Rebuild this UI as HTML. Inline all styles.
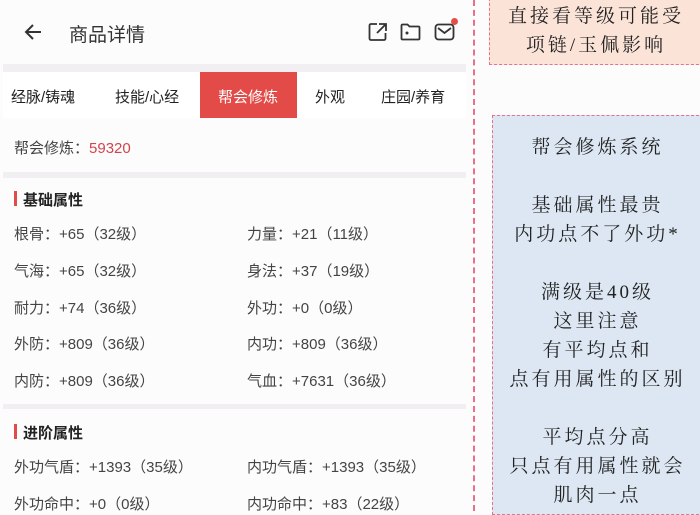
<!DOCTYPE html>
<html><head><meta charset="utf-8"><style>
*{margin:0;padding:0;box-sizing:border-box}
body{width:700px;height:511px;overflow:hidden;background:#fdfcfd;position:relative;font-family:"Liberation Sans","Noto Sans CJK SC",sans-serif;color:#333}
.a{position:absolute;white-space:nowrap}
.row{font-size:15px;color:#444}
.hand{font-family:"Liberation Serif","Noto Serif CJK SC",serif;color:#222;font-size:19px;text-align:center;line-height:29px;letter-spacing:3px}
</style></head><body>
<svg class="a" style="left:22px;top:21px" width="22" height="22" viewBox="0 0 22 22"><path d="M19 11H4M11 4L4 11L11 18" fill="none" stroke="#333" stroke-width="2"/></svg>
<div class="a" style="left:69px;top:20px;font-size:19px;color:#333">商品详情</div>
<svg class="a" style="left:368px;top:22px" width="20" height="20" viewBox="0 0 20 20"><path d="M9 2H3a1.5 1.5 0 0 0-1.5 1.5v13A1.5 1.5 0 0 0 3 18h13a1.5 1.5 0 0 0 1.5-1.5V11M11 2h7v7M18 2L9 11" fill="none" stroke="#333" stroke-width="1.8"/></svg>
<svg class="a" style="left:400px;top:23px" width="21" height="18" viewBox="0 0 21 18"><path d="M1.5 2.5a1 1 0 0 1 1-1h5l2 2h9a1 1 0 0 1 1 1V15.5a1 1 0 0 1-1 1h-16a1 1 0 0 1-1-1z" fill="none" stroke="#333" stroke-width="1.8"/><circle cx="7" cy="10" r="1.5" fill="#333"/></svg>
<svg class="a" style="left:434px;top:23px" width="21" height="18" viewBox="0 0 21 18"><rect x="1.5" y="1.5" width="18" height="15" rx="3" fill="none" stroke="#333" stroke-width="1.8"/><path d="M4 5l6.5 5L17 5" fill="none" stroke="#333" stroke-width="1.8"/></svg>
<div class="a" style="left:451px;top:18px;width:7px;height:7px;border-radius:50%;background:#e84c48"></div>
<div class="a" style="left:3px;top:64px;width:463px;height:8px;background:#f1eff1"></div>
<div class="a" style="left:3px;top:72px;width:463px;height:46px;background:#fff"></div>
<div class="a" style="left:200px;top:72px;width:97px;height:46px;background:#e24b47"></div>
<div class="a" style="left:11px;top:86px;font-size:15px;color:#222">经脉/铸魂</div>
<div class="a" style="left:115px;top:86px;font-size:15px;color:#222">技能/心经</div>
<div class="a" style="left:218px;top:86px;font-size:15px;color:#fff">帮会修炼</div>
<div class="a" style="left:315px;top:86px;font-size:15px;color:#222">外观</div>
<div class="a" style="left:381px;top:86px;font-size:15px;color:#222">庄园/养育</div>
<div class="a row" style="left:14px;top:137px">帮会修炼：<span style="color:#d0454a">59320</span></div>
<div class="a" style="left:3px;top:172px;width:463px;height:6px;background:#f1eff1"></div>
<div class="a" style="left:14px;top:191px;width:3px;height:15px;background:#e24b47"></div>
<div class="a" style="left:23px;top:189px;font-size:15px;font-weight:bold;color:#222">基础属性</div>
<div class="a row" style="left:14px;top:223px">根骨：+65（32级）</div><div class="a row" style="left:247px;top:223px">力量：+21（11级）</div>
<div class="a row" style="left:14px;top:260px">气海：+65（32级）</div><div class="a row" style="left:247px;top:260px">身法：+37（19级）</div>
<div class="a row" style="left:14px;top:297px">耐力：+74（36级）</div><div class="a row" style="left:247px;top:297px">外功：+0（0级）</div>
<div class="a row" style="left:14px;top:333px">外防：+809（36级）</div><div class="a row" style="left:247px;top:333px">内功：+809（36级）</div>
<div class="a row" style="left:14px;top:370px">内防：+809（36级）</div><div class="a row" style="left:247px;top:370px">气血：+7631（36级）</div>
<div class="a" style="left:3px;top:404px;width:463px;height:5px;background:#f1eff1"></div>
<div class="a" style="left:14px;top:424px;width:3px;height:15px;background:#e24b47"></div>
<div class="a" style="left:23px;top:422px;font-size:15px;font-weight:bold;color:#222">进阶属性</div>
<div class="a row" style="left:14px;top:456px">外功气盾：+1393（35级）</div><div class="a row" style="left:247px;top:456px">内功气盾：+1393（35级）</div>
<div class="a row" style="left:14px;top:493px">外功命中：+0（0级）</div><div class="a row" style="left:247px;top:493px">内功命中：+83（22级）</div>
<div class="a" style="left:473px;top:0;height:511px;border-left:2px dashed #e8708a"></div>
<div class="a" style="left:489px;top:-2px;width:215px;height:67px;background:#fbe3d8;border:1.5px dashed #e8708a"></div>
<div class="a hand" style="left:489px;top:2px;width:214px">直接看等级可能受<br>项链/玉佩影响</div>
<div class="a" style="left:492px;top:115px;width:212px;height:400px;background:#dce7f3;border:1.5px dashed #e8708a"></div>
<div class="a hand" style="left:492px;top:133px;width:211px">帮会修炼系统<br><br>基础属性最贵<br>内功点不了外功*<br><br>满级是40级<br>这里注意<br>有平均点和<br>点有用属性的区别<br><br>平均点分高<br>只点有用属性就会<br>肌肉一点</div>
</body></html>
